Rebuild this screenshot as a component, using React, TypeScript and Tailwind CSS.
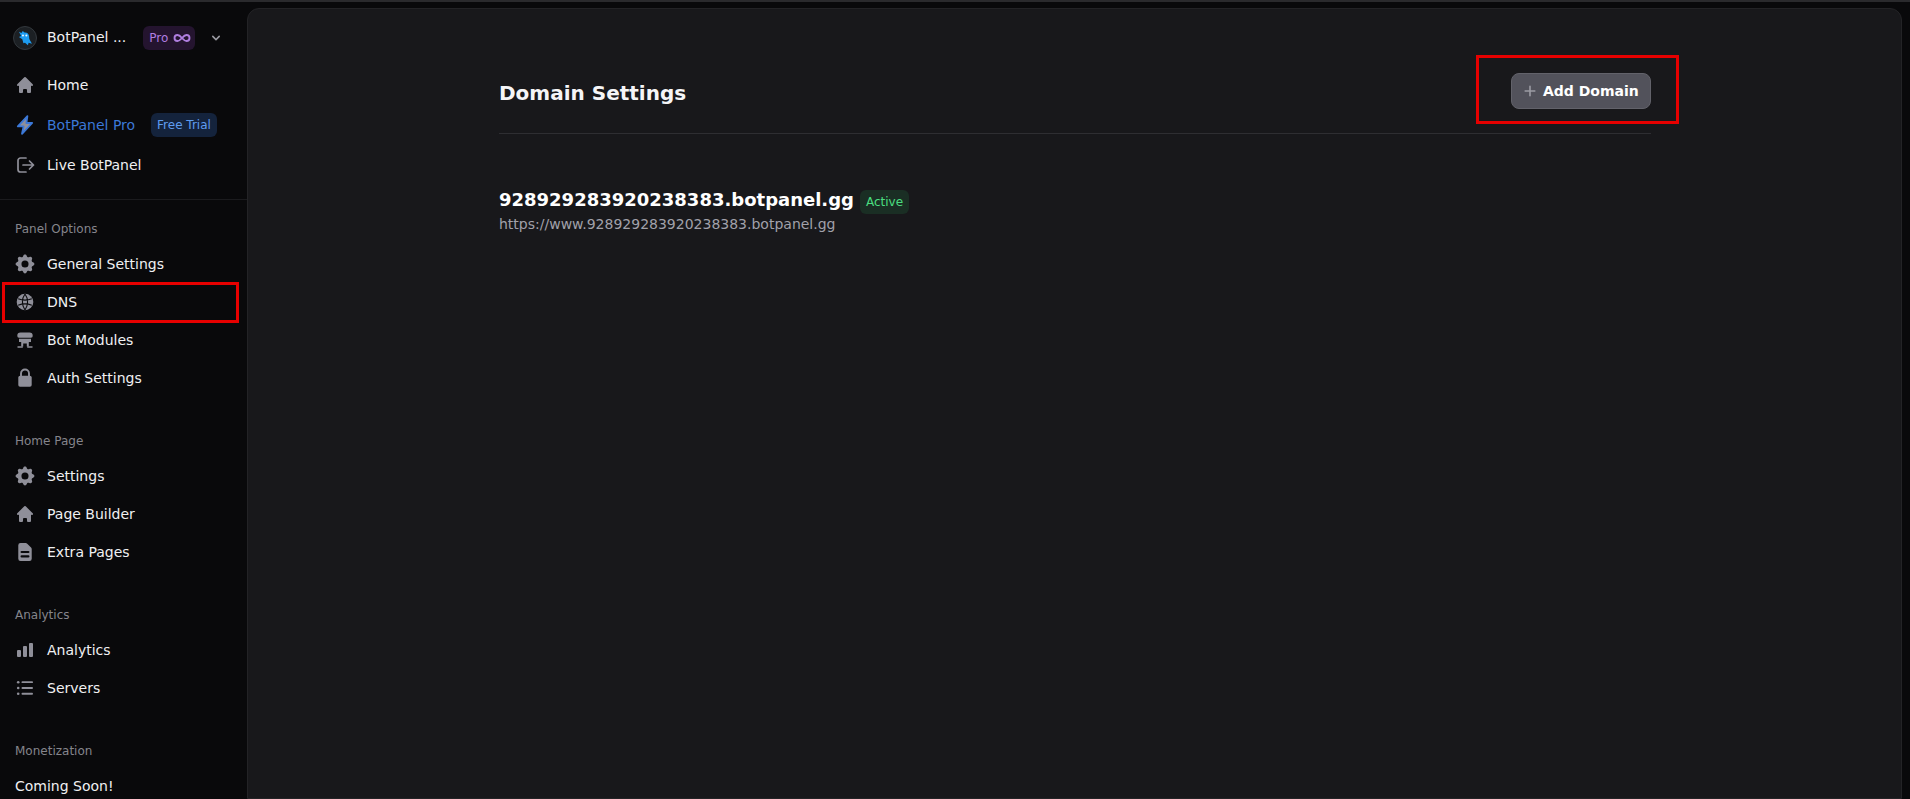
import { Infinity as InfinityIcon } from 'lucide-react';
import { HiChartBar, HiChevronDown, HiCog, HiDocumentText, HiHome, HiPlus } from 'react-icons/hi';
import type { ComponentType, ReactNode } from 'react';

type IconType = ComponentType<{ className?: string }>;

function GlobeIcon({ className }: { className?: string }) {
  return (
    <svg viewBox="0 0 20 20" className={className} fill="none">
      <circle cx="10" cy="10" r="8.300" fill="currentColor" />
      <path
        d="M3.200 6.800c4.300 1.700 9.300 1.700 13.600 0M3.200 13.200c4.300-1.700 9.300-1.700 13.600 0M10 2C6.600 6.500 6.600 13.500 10 18M10 2c3.400 4.500 3.400 11.500 0 16"
        strokeWidth="1.100"
        className="stroke-[#09090b]"
      />
    </svg>
  );
}

function ModulesIcon({ className }: { className?: string }) {
  return (
    <svg viewBox="0 0 20 20" className={className} fill="currentColor">
      <path d="M5.500 2.500h9A3.200 3.200 0 0 1 17.700 5.700v.3a1.700 1.700 0 0 1-1.700 1.700H4A1.700 1.700 0 0 1 2.300 6v-.3A3.200 3.200 0 0 1 5.500 2.500z" />
      <path d="M4 8.700h12V12h-2.200v4.400h-2V13.500H8.200v2.900h-2V12H4z" />
      <path d="M2.500 16.200h5.300v1.600H2.500zM12.200 16.200h5.300v1.600h-5.300z" />
    </svg>
  );
}

function LockIcon({ className }: { className?: string }) {
  return (
    <svg viewBox="0 0 20 20" className={className} fill="currentColor">
      <rect x="3.300" y="7.700" width="13.400" height="11" rx="1.800" />
      <path d="M6 8V5.500a4 4 0 0 1 8 0V8" fill="none" stroke="currentColor" strokeWidth="1.900" />
    </svg>
  );
}

function ListIcon({ className }: { className?: string }) {
  return (
    <svg viewBox="0 0 20 20" className={className} fill="currentColor">
      <circle cx="3.200" cy="4.200" r="1.300" />
      <circle cx="3.200" cy="10" r="1.300" />
      <circle cx="3.200" cy="15.800" r="1.300" />
      <rect x="6.500" y="3.200" width="11.500" height="1.900" rx="0.900" />
      <rect x="6.500" y="9" width="11.500" height="1.900" rx="0.900" />
      <rect x="6.500" y="14.800" width="11.500" height="1.900" rx="0.900" />
    </svg>
  );
}

function BoltIcon({ className }: { className?: string }) {
  return (
    <svg viewBox="0 0 20 20" className={className}>
      <path
        d="M12.400 1.200 2.800 11.400h5.800l-1.600 7.400 10.200-10.800h-5.800z"
        fill="#8f8f99"
        stroke="#3b78d8"
        strokeWidth="1.800"
        strokeLinejoin="round"
      />
    </svg>
  );
}

function LiveIcon({ className }: { className?: string }) {
  return (
    <svg
      viewBox="0 0 20 20"
      className={className}
      fill="none"
      stroke="currentColor"
      strokeWidth="1.700"
      strokeLinecap="round"
      strokeLinejoin="round"
    >
      <path d="M11 3H5.500A2.500 2.500 0 0 0 3 5.500v9A2.500 2.500 0 0 0 5.500 17H11" />
      <path d="M8 10h10.500M14.500 6l4 4-4 4" />
    </svg>
  );
}

function CogIcon({ className }: { className?: string }) {
  return <HiCog className={`${className} scale-[1.18]`} />;
}

function DocIcon({ className }: { className?: string }) {
  return <HiDocumentText className={`${className} scale-[1.12]`} />;
}

function NavRow({ icon: Icon, label }: { icon: IconType; label: string }) {
  return (
    <div className="flex h-[38px] items-center pl-[15px]">
      <Icon className="h-5 w-5 shrink-0 text-[#8f8f99]" />
      <span className="ml-[12px] text-[14px] text-[#f0f0f2]">{label}</span>
    </div>
  );
}

function NavGroup({ title, children }: { title: string; children: ReactNode }) {
  return (
    <div className="mb-[28px]">
      <div className="flex h-[32px] items-center pl-[15px] text-[12px] text-[#85858c]">{title}</div>
      {children}
    </div>
  );
}

function GhostLogo() {
  return (
    <div className="flex h-6 w-6 items-center justify-center rounded-full border border-[#33383d] bg-[#1c2024]">
      <svg viewBox="0 0 16 16" className="h-[18px] w-[18px]">
        <path
          d="M2.600 2.400 4.800 3.600 6 1.800 7.600 3.200c2.400-.2 3.800 1.200 4 3.200l.2 2.400 2.400 4.200-3-.8-.6 2.200-2.600-2.200-1.400.4-1-3.600-3-1.800 2-1z"
          fill="#1d9bf0"
        />
        <circle cx="6.200" cy="5.800" r="0.900" fill="#e8f4ff" />
        <circle cx="9.200" cy="5.800" r="0.900" fill="#e8f4ff" />
      </svg>
    </div>
  );
}

export default function App() {
  return (
    <div
      className="relative flex h-[799px] w-[1910px] overflow-hidden border-t-2 border-[#2a2a2d] bg-[#09090b] text-white"
      style={{ fontFamily: '"DejaVu Sans", sans-serif' }}
    >
      <aside className="w-[247px] shrink-0">
        <div className="flex h-[57px] items-center pt-[14px] pl-[13px]">
          <GhostLogo />
          <span className="ml-[10px] text-[14px] text-[#f0f0f2]">BotPanel ...</span>
          <span className="ml-[17px] flex h-6 items-center gap-[5px] rounded-md bg-[#24142f] pr-[4px] pl-[6px] text-[12px] text-[#b07ee0]">
            Pro
            <InfinityIcon className="h-[18px] w-[18px]" strokeWidth={2.5} />
          </span>
          <HiChevronDown className="ml-[13px] h-4 w-4 text-[#9a9aa2]" />
        </div>

        <div className="mt-[6px] h-[120px]">
          <div className="flex h-10 items-center pl-[15px]">
            <HiHome className="h-5 w-5 text-[#8f8f99]" />
            <span className="ml-[12px] text-[14px] text-[#f0f0f2]">Home</span>
          </div>
          <div className="flex h-10 items-center pl-[15px]">
            <BoltIcon className="h-5 w-5" />
            <span className="ml-[12px] text-[14px] text-[#3b78d8]">BotPanel Pro</span>
            <span className="ml-[16px] flex h-6 items-center rounded-md bg-[#14233c] px-[6px] text-[12px] text-[#5f9cf0]">
              Free Trial
            </span>
          </div>
          <div className="flex h-10 items-center pl-[15px]">
            <LiveIcon className="h-5 w-5 text-[#8f8f99]" />
            <span className="ml-[12px] text-[14px] text-[#f0f0f2]">Live BotPanel</span>
          </div>
        </div>

        <div className="mt-[14px] border-t border-[#1b1b1e] pt-[13px]">
          <NavGroup title="Panel Options">
            <NavRow icon={CogIcon} label="General Settings" />
            <NavRow icon={GlobeIcon} label="DNS" />
            <NavRow icon={ModulesIcon} label="Bot Modules" />
            <NavRow icon={LockIcon} label="Auth Settings" />
          </NavGroup>
          <NavGroup title="Home Page">
            <NavRow icon={CogIcon} label="Settings" />
            <NavRow icon={HiHome} label="Page Builder" />
            <NavRow icon={DocIcon} label="Extra Pages" />
          </NavGroup>
          <NavGroup title="Analytics">
            <NavRow icon={HiChartBar} label="Analytics" />
            <NavRow icon={ListIcon} label="Servers" />
          </NavGroup>
          <div className="flex h-[32px] items-center pl-[15px] text-[12px] text-[#85858c]">Monetization</div>
          <div className="flex h-[38px] items-center pl-[15px] text-[14px] text-[#f0f0f2]">Coming Soon!</div>
        </div>
      </aside>

      <main className="mt-[6px] mr-[8px] flex-1 rounded-t-xl border border-[#232326] bg-[#18181b] pl-[251px] pr-[250px]">
        <div className="flex h-[125px] items-center justify-between border-b border-[#2e2e32] pt-[44px]">
          <h1 className="text-[20px] font-bold text-[#f5f5f7]">Domain Settings</h1>
          <button className="mb-[4px] flex h-9 w-[140px] items-center justify-start gap-[5px] rounded-lg border border-[#62626a] bg-[#52525b] pl-[10px] text-[14px] font-bold text-white">
            <HiPlus className="h-4 w-4 text-[#9c9ca4]" />
            Add Domain
          </button>
        </div>

        <div className="mt-[52px]">
          <div className="flex items-center">
            <span className="-translate-y-px text-[18px] font-bold text-white">928929283920238383.botpanel.gg</span>
            <span className="mt-[4px] ml-[6px] flex h-6 items-center rounded-md bg-[#1a2e24] px-[6px] text-[12px] text-[#4ade80]">
              Active
            </span>
          </div>
          <div className="text-[14px] text-[#a1a1aa]">https://www.928929283920238383.botpanel.gg</div>
        </div>
      </main>

      {/* red annotation boxes from the screenshot */}
      <div className="absolute top-[280px] left-[2px] h-[41px] w-[237px] border-[3px] border-[#e60000]" />
      <div className="absolute top-[53px] left-[1476px] h-[69px] w-[203px] border-[3px] border-[#e60000]" />
    </div>
  );
}
